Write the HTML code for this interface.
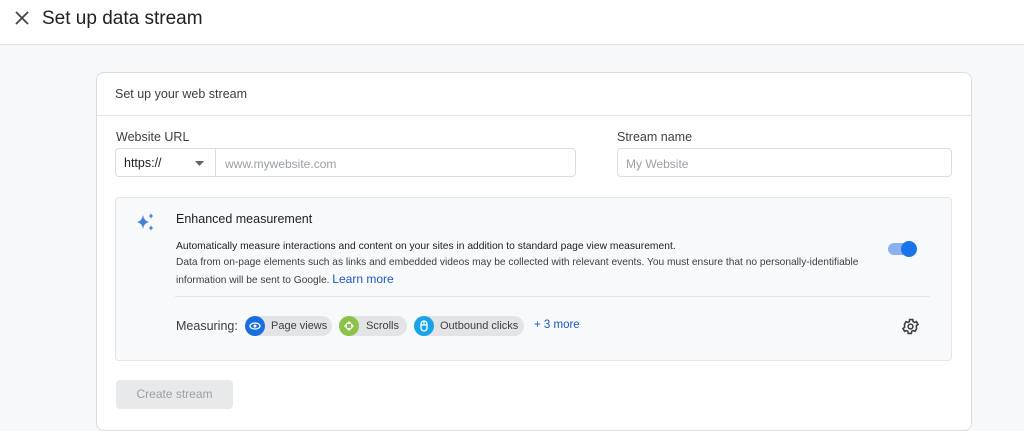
<!DOCTYPE html><html><head><style>
html,body{margin:0;width:1024px;height:431px;overflow:hidden}
body{background:#f7f8fa;font-family:"Liberation Sans",Arial,sans-serif;color:#202124;position:relative}
.a{position:absolute}
.hdr{left:0;top:0;width:1024px;height:44px;background:#fff;border-bottom:1px solid #dde1e6}
.card{left:96px;top:72px;width:874px;height:357px;background:#fff;border:1px solid #dadce0;border-radius:8px}
.inp{border:1px solid #dadce0;border-radius:4px;background:#fff;height:29px;box-sizing:border-box}
.chip{height:20px;border-radius:10px;background:#e3e4e6;font-size:11px;line-height:20px;color:#3c4043;top:316px}
.ci{position:absolute;left:0;top:0;width:20px;height:20px;border-radius:50%}
</style></head><body>
<div class="a hdr"></div>
<svg class="a" style="left:15px;top:11px" width="14" height="14"><path d="M1 1L13 13M13 1L1 13" stroke="#444" stroke-width="1.8"/></svg>
<div class="a" style="left:42px;top:8px;font-size:19px;color:#202124">Set up data stream</div>
<div class="a card"></div>
<div class="a" style="left:115px;top:87px;font-size:12.5px;color:#3c4043">Set up your web stream</div>
<div class="a" style="left:97px;top:115px;width:874px;height:1px;background:#e3e5e8"></div>
<div class="a" style="left:116px;top:130px;font-size:12.5px;color:#3c4043">Website URL</div>
<div class="a" style="left:617px;top:130px;font-size:12.5px;color:#3c4043">Stream name</div>
<div class="a inp" style="left:115px;top:148px;width:461px"></div>
<div class="a" style="left:215px;top:149px;width:1px;height:27px;background:#dadce0"></div>
<div class="a" style="left:124px;top:156px;font-size:12.5px;color:#202124">https://</div>
<svg class="a" style="left:195px;top:161px" width="10" height="6"><path d="M0 0H9L4.5 5Z" fill="#5f6368"/></svg>
<div class="a" style="left:225px;top:157px;font-size:12px;color:#9aa0a6">www.mywebsite.com</div>
<div class="a inp" style="left:617px;top:148px;width:335px"></div>
<div class="a" style="left:626px;top:157px;font-size:12px;color:#9aa0a6">My Website</div>
<div class="a" style="left:115px;top:197px;width:835px;height:162px;background:#f8f9fa;border:1px solid #e3e5e8;border-radius:4px"></div>
<svg class="a" style="left:136px;top:212px" width="20" height="20"><path d="M7 3Q8 9 13 10Q8 11 7 17Q6 11 1 10Q6 9 7 3Z" fill="#4a7fd9"/><path d="M15 1Q15.5 3.5 17.5 4Q15.5 4.5 15 7Q14.5 4.5 12.5 4Q14.5 3.5 15 1Z M15 13Q15.5 15.5 17.5 16Q15.5 16.5 15 19Q14.5 16.5 12.5 16Q14.5 15.5 15 13Z" fill="#4a7fd9"/></svg>
<div class="a" style="left:176px;top:212px;font-size:12.5px;color:#202124">Enhanced measurement</div>
<div class="a" style="left:176px;top:239px;font-size:10.3px;color:#202124;line-height:16px">Automatically measure interactions and content on your sites in addition to standard page view measurement.</div>
<div class="a" style="left:176px;top:255px;font-size:10.2px;color:#3c4043;line-height:16px;width:720px">Data from on-page elements such as links and embedded videos may be collected with relevant events. You must ensure that no personally-identifiable information will be sent to Google. <span style="color:#1a56c8;font-size:12px">Learn more</span></div>
<div class="a" style="left:888px;top:243px;width:24px;height:12px;border-radius:6px;background:#8ab0f0"></div>
<div class="a" style="left:901px;top:241px;width:16px;height:16px;border-radius:50%;background:#1a73e8"></div>
<div class="a" style="left:175px;top:296px;width:755px;height:1px;background:#e3e5e8"></div>
<div class="a" style="left:176px;top:319px;font-size:12.5px;color:#3c4043">Measuring:</div>
<div class="a chip" style="left:245px;width:87px"><div class="ci" style="background:#1a6fe0"></div><svg class="a" style="left:4px;top:6px" width="12" height="8"><ellipse cx="6" cy="4" rx="5" ry="3" fill="none" stroke="#fff" stroke-width="1.3"/><circle cx="6" cy="4" r="1.5" fill="#fff"/></svg><span style="margin-left:26px">Page views</span></div>
<div class="a chip" style="left:339px;width:68px"><div class="ci" style="background:#8bc34a"></div><svg class="a" style="left:4px;top:4px" width="12" height="12"><path d="M6 1L9 4H3ZM6 11L3 8H9ZM1 6L4 3V9ZM11 6L8 9V3Z" fill="#fff"/></svg><span style="margin-left:27px">Scrolls</span></div>
<div class="a chip" style="left:414px;width:110px"><div class="ci" style="background:#1aa3e8"></div><svg class="a" style="left:6px;top:4px" width="8" height="12"><rect x="1" y="1" width="6" height="10" rx="3" fill="none" stroke="#fff" stroke-width="1.3"/><path d="M1 5H7M4 1V5" stroke="#fff" stroke-width="1.2"/></svg><span style="margin-left:26px">Outbound clicks</span></div>
<div class="a" style="left:534px;top:319px;font-size:11.5px;color:#1a56c8">+ 3 more</div>
<svg class="a" style="left:901px;top:317px" width="19" height="19" viewBox="0 0 24 24"><path d="M19.4 13a7.5 7.5 0 000-2l2.1-1.6-2-3.5-2.5 1a7 7 0 00-1.7-1l-.4-2.7h-4l-.4 2.7a7 7 0 00-1.7 1l-2.5-1-2 3.5L4.6 11a7.5 7.5 0 000 2l-2.1 1.6 2 3.5 2.5-1a7 7 0 001.7 1l.4 2.7h4l.4-2.7a7 7 0 001.7-1l2.5 1 2-3.5z" fill="none" stroke="#3c4043" stroke-width="2"/><circle cx="12" cy="12" r="3" fill="none" stroke="#3c4043" stroke-width="2"/></svg>
<div class="a" style="left:116px;top:380px;width:117px;height:29px;background:#e8e9ea;border-radius:4px;font-size:12px;color:#9aa0a6;text-align:center;line-height:29px">Create stream</div>
</body></html>
